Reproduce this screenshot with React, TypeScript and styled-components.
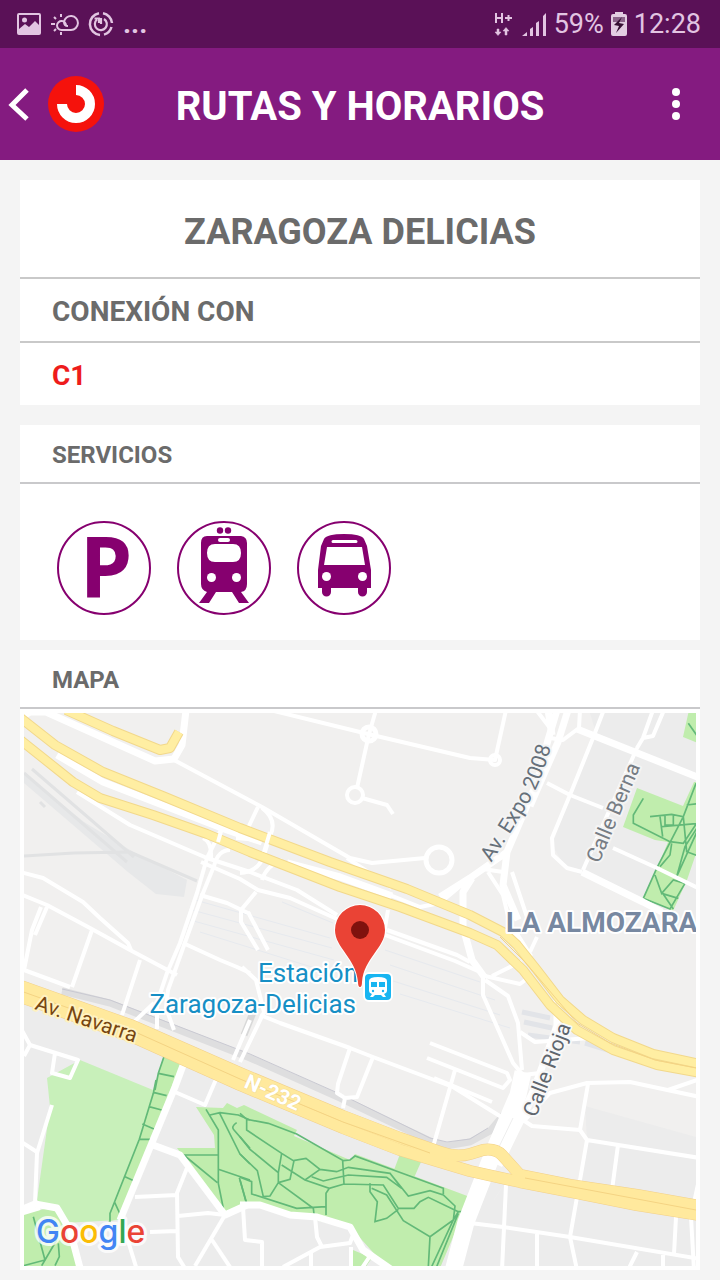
import React from "react";
import styled, { createGlobalStyle } from "styled-components";

const GlobalStyle = createGlobalStyle`
  * { box-sizing: border-box; }
  body {
    margin: 0;
    background: #f4f4f4;
    font-family: Roboto, "Liberation Sans", sans-serif;
  }
`;

const StatusBar = styled.div`
  display: flex;
  align-items: center;
  justify-content: space-between;
  height: 48px;
  padding: 0 19px 0 16px;
  background: #5a1157;
  color: #e2c5e2;
  font-size: 27px;
`;

const StatusGroup = styled.div<{ $gap: number }>`
  display: flex;
  align-items: center;
  gap: ${(p) => p.$gap}px;
`;

const More = styled.span`
  font-size: 28px;
  font-weight: 700;
  line-height: 48px;
`;

const Header = styled.header`
  display: grid;
  grid-template-columns: 112px 1fr 112px;
  align-items: center;
  height: 112px;
  background: #841b80;
  color: #fff;
`;

const BackButton = styled.button`
  display: flex;
  align-items: center;
  gap: 16px;
  padding: 0 0 0 8px;
  border: 0;
  background: none;
`;

const MenuButton = styled.button`
  display: flex;
  justify-self: end;
  padding: 0 32px;
  border: 0;
  background: none;
`;

const Title = styled.h1`
  margin: 0;
  padding-top: 6px;
  text-align: center;
  font-size: 40px;
  line-height: 48px;
  font-weight: 700;
  white-space: nowrap;
`;

const Main = styled.main`
  padding: 20px 20px 10px;
`;

const Card = styled.section<{ $after: number }>`
  margin-bottom: ${(p) => p.$after}px;
  background: #fff;
  color: #6b6b6b;
`;

const StationName = styled.h2`
  margin: 0;
  padding: 30px 0 23px;
  border-bottom: 2px solid #c9c9c9;
  text-align: center;
  font-size: 36px;
  line-height: 44px;
`;

const RowTitle = styled.h3`
  margin: 0;
  padding: 16px 32px 12px;
  border-bottom: 2px solid #c9c9c9;
  font-size: 28px;
  line-height: 34px;
`;

const SectionTitle = styled.h3`
  margin: 0;
  padding: 16px 32px 13px;
  border-bottom: 2px solid #c9c9cb;
  font-size: 24px;
  line-height: 28px;
`;

const LineLink = styled.a`
  display: block;
  padding: 16px 32px 12px;
  color: #ee1c1c;
  font-size: 28px;
  font-weight: 700;
  line-height: 34px;
  text-decoration: none;
`;

const Services = styled.div`
  display: flex;
  gap: 24px;
  padding: 36px 36px 24px;
`;

const ServiceIcon = styled.svg`
  display: block;
  width: 96px;
  height: 96px;
  overflow: visible;
  fill: #86006f;
`;

const MapFrame = styled.div`
  padding: 4px;
`;

const MapSvg = styled.svg`
  display: block;
  width: 100%;
  height: auto;
  font-family: Roboto, "Liberation Sans", sans-serif;
`;

const Ring = () => (
  <circle cx="48" cy="48" r="46" fill="none" stroke="#86006f" strokeWidth="2" />
);

const motorways = [
  "M66 710 113 731 160 750 170 748 179 732",
];

const upperA = "M18 716 55 745 103 772 165 797 240 828 330 862 407 889 470 915 503 932 517 945 537 970 560 1000 583 1020 613 1038 653 1054 700 1064";
const upperB = "M18 738 73 782 100 798 153 815 207 834 250 852 340 887 400 907 470 933 497 945 523 970 550 1005 577 1030 613 1050 657 1065 700 1073";
const n232A = "M18 985 133 1026 240 1073 343 1116 400 1138 440 1152Q456 1158 470 1154L483 1150Q495 1148 502 1155L520 1175 570 1185 637 1195 700 1206";
const n232B = "M18 996 133 1037 240 1085 343 1128 400 1150 470 1171 520 1182 577 1193 637 1205 700 1215";

const wideRoads = [
  "M20 718 30 712 46 712 155 761 174 759 182 745 186 710",
  "M577 729 700 778",
  "M57 755 103 782 227 830 262 842",
  "M287 863 340 877 392 896",
  "M582 872 643 902 662 912",
  "M185 1060 175 1087 120 1220",
  "M20 1210 35 1204 57 1208 70 1230 80 1268",
  "M240 1205 260 1205 290 1215 317 1217 350 1227 363 1250 392 1270",
  "M153 1145 180 1155 225 1215 247 1205",
];

const roads = [
  "M174 760 262 807 350 858 372 863 425 858",
  "M347 858 392 888",
  "M270 710 368 734 470 758 495 760 506 710",
  "M376 710 369 734 357 788",
  "M362 798 387 805 393 814",
  "M77 792 130 825 207 858 250 872 297 890 337 915",
  "M201 862 240 879 258 890 290 898 337 919",
  "M387 930 457 955 470 962",
  "M385 935 455 961 480 972",
  "M222 828 207 858 197 893 180 943 167 973 157 1003 157 1029",
  "M230 850Q218 850 214 866L203 893 187 937 168 990 166 1008 174 1030",
  "M203 838Q212 842 211 858M258 807 248 828M262 808Q278 820 270 836L265 852Q260 872 240 873M282 860Q266 866 262 880M236 838 260 840",
  "M20 872 43 878 83 902 100 918 128 943 131 950",
  "M20 894 47 905 90 928 130 950 177 975",
  "M41 907 32 930 24 970 70 987M47 907 35 935M92 930 72 987M140 960 122 1015M135 1021 154 1003",
  "M183 943 220 960 237 967 250 973M200 895 227 903 250 914M256 892 241 910 241 922 258 950M248 912 268 950M242 967 256 980 264 1012 240 1062M250 1020 233 1060",
  "M260 1015 280 1023 350 1048 373 1057 453 1087 503 1118M350 1048 338 1084 337 1093 345 1098 357 1097 373 1057M345 1098 343 1108",
  "M430 1043 507 1073 510 1080 503 1088 427 1058M455 1070 433 1147M434 1078 492 1102",
  "M390 895 420 907 440 903 470 878 483 869 503 872M488 872 503 895 513 937 532 962M512 872 528 920M388 910 384 934",
  "M537 937 530 952M485 976 520 984 528 978 520 962 492 976M483 977 483 995 513 1063 523 1075 540 1073M485 980 508 996 518 1023 522 1070",
  "M520 1032 535 1042 590 1038M525 1120 550 1093 587 1083 630 1082 700 1097M588 1084 580 1130 587 1140 700 1158M668 1090 700 1079M523 1120 532 1126 580 1130M587 1140 570 1237 577 1270M618 1145 612 1190",
  "M470 1223 503 1227 570 1237 700 1259M506 1185 502 1270M537 1233V1270M637 1252 628 1270M663 1255V1270M676 1217 674 1254M691 1217 694 1270M700 1175 694 1203",
  "M603 712 593 738 570 795 552 838 553 855 567 868 582 872M547 783 570 795 603 808M613 848 657 868 700 889M637 748 583 870M653 710 643 738 637 748M664 710 653 736 643 738M537 711 550 728M580 710 579 728 563 740 550 738",
  "M175 1092 205 1105 220 1070M187 1168 177 1193 178 1257 186 1270M135 1197 177 1195M178 1216 208 1213 225 1215 195 1266M150 1232 177 1231M212 1240 232 1270M120 1215 137 1270",
  "M20 1141 37 1152M52 1105 37 1153 35 1203M20 1214 40 1208M20 1027 30 1045 78 1060 70 1078 52 1073 55 1053M30 1045 24 1056",
  "M283 1267 320 1247 350 1243 354 1232M315 1217 317 1237 322 1247M311 1251V1270M243 1207 245 1240 262 1242V1270M351 1247V1270M372 1253 362 1268",
];

const MapView = () => (
  <MapSvg viewBox="24 713 672 553" role="img" aria-label="Mapa de Zaragoza Delicias">
    <rect x="24" y="713" width="672" height="553" fill="#f1f0ef" />
    <path d="M590 713H700V925L643 904 566 868 552 845 595 730ZM20 1000 133 1040 240 1088 343 1130 400 1155 500 1180 700 1216V1270H20ZM585 1106 700 1138V1206L577 1185 587 1140Z" fill="#ececec" />
    <path d="M24 774 84 822 130 850 187 880 184 897 156 894 128 872 24 783Z" fill="#e7e8e9" />
    <g fill="none" stroke="#e1e2e3" strokeWidth="3">
      <path d="M24 856 74 853 130 852 197 881M24 773 127 862M32 769 134 857M45 807 40 802" />
    </g>
    <g fill="none" stroke="#e6e9ee" strokeWidth="1">
      <path d="M195 900 330 938M192 910 332 948M190 920 334 960M200 932 334 974M385 950 480 982M390 965 495 1000M390 980 500 1015M400 994 510 1028M282 902 333 923" />
    </g>
    <g fill="none" stroke="#e2e4e8" strokeWidth="5">
      <path d="M522 1012 550 1018M524 1022 552 1028M528 1035 580 1042M585 1043 650 1063" />
    </g>
    <path d="M62 991 110 1003 250 1058 340 1098 430 1141 447 1146 470 1142 490 1131 506 1112" fill="none" stroke="#dededf" strokeWidth="7" />
    <path d="M62 989 110 1000 250 1054 340 1094 430 1138 447 1142 470 1139 488 1128" fill="none" stroke="#c9c9d2" strokeWidth="1" />
    <path d="M254 1010 244 1035" stroke="#d8d8d8" strokeWidth="7" />

    <path d="M80 1060 153 1090 165 1052 183 1057 177 1080 120 1220 63 1223 37 1200 50 1107 47 1078Z" fill="#c8f0ba" />
    <g fill="#c0edad">
      <path d="M165 1052 183 1057 120 1218 108 1222 140 1138Z" />
      <path d="M24 1213 60 1206 80 1266H24Z" />
      <path d="M196 1107 223 1108 227 1103 237 1108 244 1105 297 1130 294 1136 350 1160 355 1154 470 1197 440 1268H387L353 1230 290 1213 247 1203 225 1214 177 1148 215 1148 214 1135Z" />
      <path d="M400 1154 421 1162 413 1180 394 1170ZM353 1250 372 1258 365 1268H353Z" />
      <path d="M689 710H700V744L683 737ZM637 788 683 806 694 782H700V842L687 880 673 911 643 898 658 866 668 842 655 840 623 827Z" />
    </g>
    <g fill="none" stroke="#62b978" strokeWidth="5">
      <g transform="translate(470 705) scale(.33333)">
        <path d="M655 55 690 105M520 280 490 330V355L600 410 640 415 690 340M540 335 605 328 640 335 650 440 690 455M570 335 578 395M585 333V360H610V330M678 235 640 335 560 490 520 580 600 612 645 535 610 525 575 565 555 510M560 490 620 515 645 425 690 355 575 365M570 485 600 450 605 415M620 515 690 360M575 565 625 580M650 300 690 295M580 568 610 612" />
      </g>
      <g transform="translate(20 890) scale(.33333)">
        <path d="M437 485 415 550 405 600M415 550 462 560" />
      </g>
      <g transform="translate(20 1080) scale(.33333)">
        <path d="M408 0 400 40 358 178 270 400V425M403 38 440 47M387 80 425 90M367 132 402 147M358 178H395M315 290 343 303M283 365 300 402M558 88 595 150V310L610 385M570 105 600 98 655 105 690 120M470 225H595M495 228 592 308M595 268 690 300M598 98 660 222 690 252M642 150Q632 140 650 128M642 150 690 205M658 293 680 370M40 410 75 540 10 557M75 540 65 557M75 540 110 480M115 490 118 530 105 557" />
      </g>
      <g transform="translate(240 1080) scale(.33333)">
        <path d="M0 100 20 118 85 130 170 162 310 242 330 240 345 228 610 325V342M20 120V150L125 220 160 242 198 235 240 268 290 275 325 262 450 280 505 348 570 332 610 345 645 378 640 420 570 470 490 422 440 345 395 325M0 170 30 208 115 278 125 220M115 278 115 308 220 385 222 402M115 308 150 298 162 242M125 255 195 300 268 325 312 312 430 315 475 385H522L540 365 565 352 655 395M195 300 240 268M215 290 250 303 325 285 440 292 485 325 450 280M308 242 312 312M268 325 258 340V405M390 310V335L412 365 405 425 440 415 475 388M0 222 52 272 70 350 90 348 115 308M0 292 35 305V342L170 385 258 380M0 300 18 365M570 470 565 560M655 395 640 420 575 560M655 400 590 560M675 395H655" />
      </g>
    </g>

    <g fill="none" stroke="#fff" strokeLinejoin="round">
      {roads.map((d) => <path key={d} d={d} strokeWidth="4" />)}
      {wideRoads.map((d) => <path key={d} d={d} strokeWidth="7" />)}
      <circle cx="369" cy="734" r="7" strokeWidth="5" />
      <circle cx="355" cy="795" r="8" strokeWidth="4" />
      <circle cx="439" cy="860" r="13" strokeWidth="5" />
      <circle cx="495" cy="760" r="5" strokeWidth="4" />
      <path d="M557 710 548 740 537 782 507 852 470 878 440 897M507 852 503 885 518 920M472 878 463 892V927L472 960 485 978M513 930 530 957M557 995V1026L530 1100" strokeWidth="7" />
      <path d="M568 710 558 742 530 806M548 710 552 735" strokeWidth="7" />
      <path d="M523 1072 518 1095 493 1153 466 1222 452 1275" strokeWidth="17" />
      <path d="M540 1080 515 1130 498 1165" strokeWidth="9" />
    </g>
    <path d="M513 1118 497 1151M508 1178 494 1200" stroke="#eee" strokeWidth="1" />
    <g fill="none" strokeLinejoin="round">
      {[...motorways, upperA, upperB].map((d) => <path key={d} d={d} stroke="#f2d88b" strokeWidth="10" />)}
      {[n232A, n232B].map((d) => <path key={d} d={d} stroke="#f2d08a" strokeWidth="12" />)}
      {[...motorways, upperA, upperB].map((d) => <path key={d} d={d} stroke="#ffeea2" strokeWidth="8" />)}
      {[n232A, n232B].map((d) => <path key={d} d={d} stroke="#ffe99d" strokeWidth="11" />)}
      <path d="M18 990 133 1031 240 1079 343 1122 430 1153M525 1178 696 1210M500 937 525 962 577 1023 610 1043 655 1060 696 1068" stroke="#f4d383" strokeWidth="1" />
    </g>
    <path d="M222 828 218 842M270 832 264 852" stroke="#fff" strokeWidth="4" />

    <g fontSize="21" stroke="#fff" strokeWidth="4" paintOrder="stroke" strokeLinejoin="round">
      <path id="expo" d="M491 863Q524 812 534 793T555 732" fill="none" stroke="none" />
      <path id="navarra" d="M34 1009 154 1049" fill="none" stroke="none" />
      <text fill="#66707a" stroke="#f4f4f4"><textPath href="#expo">Av. Expo 2008</textPath></text>
      <text fill="#777d84" stroke="#f4f4f4" transform="translate(599 864) rotate(-67)">Calle Berna</text>
      <text fill="#5f666e" stroke="#f8f8f8" transform="translate(536 1118) rotate(-69)">Calle Rioja</text>
      <text fill="#774610" stroke="#fff2c0"><textPath href="#navarra">Av. Navarra</textPath></text>
      <text fill="#fff" stroke="#f3dc96" strokeWidth="1" fontWeight="700" transform="translate(243 1087) rotate(24)">N-232</text>
      <text x="506" y="932" fontSize="28" fontWeight="700" fill="#7788a1">LA ALMOZARA</text>
      <g fontSize="26" fill="#168fc5" textAnchor="end">
        <text x="358" y="982">Estación</text>
        <text x="356" y="1013">Zaragoza-Delicias</text>
      </g>
    </g>

    <rect x="364" y="973" width="28" height="28" rx="5" fill="#18b5f1" stroke="#fff" strokeWidth="2" />
    <path d="M369 981Q369 977 378 977T387 981V991Q387 993 384 994L386 997H383L381 995H375L373 997H370L372 994Q369 993 369 991Z" fill="#fff" />
    <path d="M371 982H377V987H371ZM379 982H385V987H379Z" fill="#18b5f1" />
    <circle cx="373" cy="991" r="1.2" fill="#18b5f1" />
    <circle cx="383" cy="991" r="1.2" fill="#18b5f1" />
    <path d="M360 987Q358 987 358 982C356 958 335 948 335 930A25 25 0 0 1 385 930C385 948 364 958 362 982Q362 987 360 987Z" fill="#ea4335" stroke="#fff" strokeWidth="2" paintOrder="stroke" />
    <circle cx="360" cy="930" r="9" fill="#7f120e" />

    <text x="36" y="1243" fontFamily="Inter, sans-serif" fontSize="32" fontWeight="500" stroke="#fff" strokeOpacity=".8" strokeWidth="6" strokeLinejoin="round" paintOrder="stroke">
      <tspan fill="#4285f4">G</tspan><tspan fill="#ea4335">o</tspan><tspan fill="#fbbc05">o</tspan><tspan fill="#4285f4">g</tspan><tspan fill="#34a853">l</tspan><tspan fill="#ea4335">e</tspan>
    </text>
  </MapSvg>
);

export default function App() {
  return (
    <>
      <GlobalStyle />
      <StatusBar>
        <StatusGroup $gap={9}>
          <svg width="26" height="24" viewBox="0 0 26 24">
            <path fillRule="evenodd" fill="#e2c5e2" d="M3 1H23Q25 1 25 3V21Q25 23 23 23H3Q1 23 1 21V3Q1 1 3 1ZM3 3V17L9 12 13 15 19 9 23 13V3Z" />
            <circle cx="8.5" cy="8" r="2.5" fill="#e2c5e2" />
          </svg>
          <svg width="28" height="24" viewBox="0 0 28 24" fill="none" stroke="#e2c5e2" strokeWidth="2">
            <path d="M15 14A4.500 4.500 0 1 0 10.500 18H20A7 7 0 1 0 13 10Q13 14 17 14M10 2V5M10 20V23M0 12H4M3 5 5 7M3 19 5 17" />
          </svg>
          <svg width="26" height="26" viewBox="0 0 26 26" fill="none" stroke="#e2c5e2">
            <path d="M15 2.200A11 11 0 0 1 24 12M23.500 16A11 11 0 0 1 16 23.600M12 24A11 11 0 0 1 11 2.200" strokeWidth="2.500" />
            <path d="M16 8A6 6 0 1 1 9 8.500M13 13V7M6.500 7.500H11V12" strokeWidth="2.200" />
          </svg>
          <More>...</More>
        </StatusGroup>
        <StatusGroup $gap={7}>
          <svg width="20" height="26" viewBox="0 0 20 26" fill="#e2c5e2" stroke="#e2c5e2">
            <path d="M2 2V12M8 2V12M2 7H8M11 7H18M14.500 4V10" strokeWidth="2" />
            <path d="M3 18H5V21H7L4 24.500 1 21H3ZM11 24H13V20H15L12 16.500 9 20H11Z" strokeWidth=".5" />
          </svg>
          <svg width="26" height="26" viewBox="0 0 26 26" fill="#e2c5e2">
            <path d="M1 25 6 21V25ZM9 18 12 16V25H9ZM15 12 18 10V25H15ZM22 5 25 2V25H22Z" />
          </svg>
          <span>59%</span>
          <svg width="16" height="24" viewBox="0 0 16 24">
            <path fill="#e2cde2" d="M4 0H12V2H14Q16 2 16 4V22Q16 24 14 24H2Q0 24 0 22V4Q0 2 2 2H4Z" />
            <path fill="#8b638a" d="M2 5H14V10H2Z" />
            <path fill="#371034" d="M11 5 3 13 8 14 5 21 13 12 8 11Z" />
          </svg>
          <span>12:28</span>
        </StatusGroup>
      </StatusBar>
      <Header>
        <BackButton aria-label="Volver">
          <svg width="24" height="56" viewBox="0 0 24 56" fill="none" stroke="#fff" strokeWidth="5">
            <path d="M19 14 4 29 19 43" />
          </svg>
          <svg width="56" height="56" viewBox="0 0 56 56">
            <circle cx="28" cy="28" r="28" fill="#f5120c" />
            <path d="M28 14A14 14 0 1 1 14 28" fill="none" stroke="#fff" strokeWidth="10" />
          </svg>
        </BackButton>
        <Title>RUTAS Y HORARIOS</Title>
        <MenuButton aria-label="Menú">
          <svg width="24" height="32" viewBox="0 0 24 32" fill="#fff">
            <circle cx="12" cy="4" r="4" />
            <circle cx="12" cy="16" r="4" />
            <circle cx="12" cy="28" r="4" />
          </svg>
        </MenuButton>
      </Header>
      <Main>
        <Card $after={20}>
          <StationName>ZARAGOZA DELICIAS</StationName>
          <RowTitle>CONEXIÓN CON</RowTitle>
          <LineLink href="#c1">C1</LineLink>
        </Card>
        <Card $after={10}>
          <SectionTitle>SERVICIOS</SectionTitle>
          <Services>
            <ServiceIcon viewBox="0 0 96 96" role="img" aria-label="Aparcamiento">
              <Ring />
              <text x="24" y="77" fontFamily="Noto Sans, sans-serif" fontSize="84" fontWeight="700">P</text>
            </ServiceIcon>
            <ServiceIcon viewBox="0 0 96 96" role="img" aria-label="Tren">
              <Ring />
              <circle cx="44" cy="10.500" r="3.200" />
              <circle cx="52" cy="10.500" r="3.200" />
              <path fillRule="evenodd" d="M31 16H65Q71 17 71 23V64Q71 71 65 72L73 83H63L56 72H40L33 83H23L31 72Q25 70 25 64V23Q25 16 31 16ZM44 18Q42 18 42 20T44 22H52Q54 22 54 20T52 18ZM39 24Q31 24 31 33T39 42H57Q65 42 65 33T57 24Z" />
              <circle cx="35.500" cy="57.500" r="4.500" fill="#fff" />
              <circle cx="60.500" cy="57.500" r="4.500" fill="#fff" />
            </ServiceIcon>
            <ServiceIcon viewBox="0 0 96 96" role="img" aria-label="Autobús">
              <Ring />
              <path fillRule="evenodd" d="M28 19Q31 14 48 14T68 19L71 26 75 50V68H71V72A4.500 4.500 0 0 1 62 72V68H35V72A4.500 4.500 0 0 1 26 72V68H22V50L25 26ZM37 20A1.500 1.500 0 0 0 37 23H60A1.500 1.500 0 0 0 60 20ZM31 27 28 45H69L66 27Z" />
              <circle cx="30.500" cy="56.500" r="4.500" fill="#fff" />
              <circle cx="66.500" cy="56.500" r="4.500" fill="#fff" />
            </ServiceIcon>
          </Services>
        </Card>
        <Card $after={0}>
          <SectionTitle>MAPA</SectionTitle>
          <MapFrame>
            <MapView />
          </MapFrame>
        </Card>
      </Main>
    </>
  );
}
